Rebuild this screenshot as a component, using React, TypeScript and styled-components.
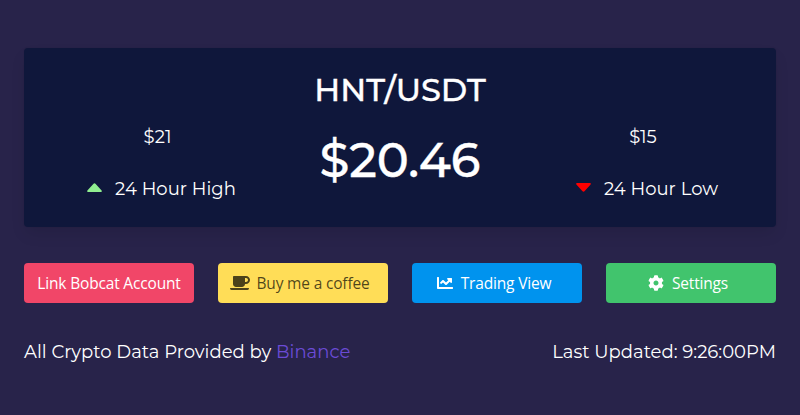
import React from "react";
import styled, { createGlobalStyle } from "styled-components";
import { FaCoffee, FaChartLine, FaCog } from "react-icons/fa";

const GlobalStyle = createGlobalStyle`
  * { box-sizing: border-box; }
  body {
    margin: 0;
    background: #28234a;
    color: #fff;
    font-family: Montserrat, Inter, sans-serif;
  }
`;

const Page = styled.main`
  height: 415px;
  padding: 48px 24px 0;
  overflow: hidden;
`;

const Card = styled.section`
  display: grid;
  grid-template-columns: 1fr 226px 1fr;
  height: 179px;
  border-radius: 4px;
  background: #0f173b;
  box-shadow: 0 8px 16px -2px rgba(10, 10, 10, 0.1), 0 0 0 1px rgba(10, 10, 10, 0.02);
`;

const Stat = styled.div<{ $inset: number }>`
  display: flex;
  flex-direction: column;
  align-items: center;
  padding: 76px 0 0 ${({ $inset }) => $inset}px;
  font-size: 18px;
  line-height: 27px;
`;

const StatValue = styled.div`
  margin-right: 8px;
`;

const StatLabel = styled.div`
  display: flex;
  align-items: center;
  gap: 13px;
  margin-top: 25px;
  letter-spacing: 0.04px;
  white-space: nowrap;
`;

const Caret = styled.svg`
  width: 15px;
  height: 9px;
  margin-bottom: 5px;
`;

const Ticker = styled.div`
  display: flex;
  flex-direction: column;
  align-items: center;
  font-weight: 500;
  white-space: nowrap;
  -webkit-text-stroke: 0.35px #fff;
`;

const Pair = styled.h1`
  margin: 22px 0 0;
  font-size: 32px;
  line-height: 40px;
  font-weight: 500;
`;

const Price = styled.div`
  margin-top: 20px;
  font-size: 48px;
  line-height: 60px;
`;

const Actions = styled.nav`
  display: grid;
  grid-template-columns: repeat(4, 170px);
  gap: 24px;
  margin-top: 36px;
`;

const Button = styled.button<{ $bg: string; $fg?: string }>`
  display: flex;
  align-items: center;
  justify-content: center;
  height: 40px;
  padding: 0;
  border: 0;
  border-radius: 4px;
  background: ${({ $bg }) => $bg};
  color: ${({ $fg = "#fff" }) => $fg};
  font: 15.5px/24px "Segoe UI", "Open Sans", sans-serif;
  letter-spacing: -0.17px;
  white-space: nowrap;
`;

const IconButton = styled(Button)<{ $iconWidth?: number; $gap?: number }>`
  gap: ${({ $gap = 8 }) => $gap}px;
  padding-right: 6px;

  svg {
    width: ${({ $iconWidth = 16 }) => $iconWidth}px;
    height: 16px;
  }
`;

const Footer = styled.footer`
  display: flex;
  justify-content: space-between;
  margin-top: 36px;
  font-size: 18px;
  line-height: 27px;
  letter-spacing: 0.02px;
  white-space: nowrap;
`;

const Link = styled.a`
  color: #6b4bd6;
`;

export default function App() {
  return (
    <>
      <GlobalStyle />
      <Page>
        <Card>
          <Stat $inset={12}>
            <StatValue>$21</StatValue>
            <StatLabel>
              <Caret viewBox="0 0 15 9">
                <path d="M1 9Q-.5 8.5.6 7.2L6.3 1Q7.5-.4 8.7 1L14.4 7.2Q15.5 8.5 14 9Z" fill="#90ee90" />
              </Caret>
              24 Hour High
            </StatLabel>
          </Stat>
          <Ticker>
            <Pair>HNT/USDT</Pair>
            <Price>$20.46</Price>
          </Ticker>
          <Stat $inset={5}>
            <StatValue>$15</StatValue>
            <StatLabel>
              <Caret viewBox="0 0 15 9">
                <path d="M1 0Q-.5.5.6 1.8L6.3 8Q7.5 9.4 8.7 8L14.4 1.8Q15.5.5 14 0Z" fill="#f00" />
              </Caret>
              24 Hour Low
            </StatLabel>
          </Stat>
        </Card>
        <Actions>
          <Button $bg="#f14668">Link Bobcat Account</Button>
          <IconButton $bg="#ffdd57" $fg="rgba(0, 0, 0, 0.7)" $gap={6} $iconWidth={20}>
            <FaCoffee />
            Buy me a coffee
          </IconButton>
          <IconButton $bg="#0093ee">
            <FaChartLine />
            Trading View
          </IconButton>
          <IconButton $bg="#41c46d">
            <FaCog />
            Settings
          </IconButton>
        </Actions>
        <Footer>
          <span>
            All Crypto Data Provided by <Link>Binance</Link>
          </span>
          <span>Last Updated: 9:26:00PM</span>
        </Footer>
      </Page>
    </>
  );
}
